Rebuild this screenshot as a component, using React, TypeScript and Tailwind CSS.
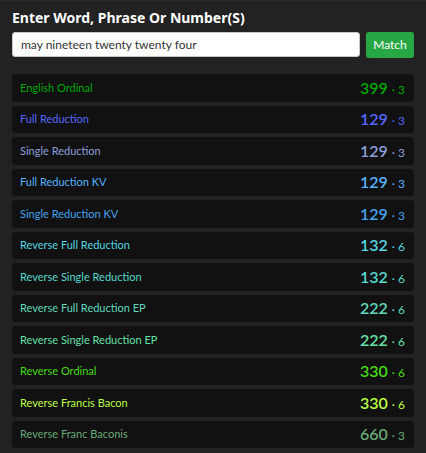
import { useState } from 'react';

// cipher rows shown under the search box
const ciphers = [
  { name: 'English Ordinal', value: 399, root: 3, color: 'text-[#00a800]' },
  { name: 'Full Reduction', value: 129, root: 3, color: 'text-[#5566ff]' },
  { name: 'Single Reduction', value: 129, root: 3, color: 'text-[#8c9edc]' },
  { name: 'Full Reduction KV', value: 129, root: 3, color: 'text-[#55b2ff]' },
  { name: 'Single Reduction KV', value: 129, root: 3, color: 'text-[#44a2ee]' },
  { name: 'Reverse Full Reduction', value: 132, root: 6, color: 'text-[#55d6e0]' },
  { name: 'Reverse Single Reduction', value: 132, root: 6, color: 'text-[#55d8cc]' },
  { name: 'Reverse Full Reduction EP', value: 222, root: 6, color: 'text-[#5fd8bc]' },
  { name: 'Reverse Single Reduction EP', value: 222, root: 6, color: 'text-[#64e0a6]' },
  { name: 'Reverse Ordinal', value: 330, root: 6, color: 'text-[#44dd11]' },
  { name: 'Reverse Francis Bacon', value: 330, root: 6, color: 'text-[#bbff44]' },
  { name: 'Reverse Franc Baconis', value: 660, root: 3, color: 'text-[#66aa77]' },
];

export default function App() {
  const [query, setQuery] = useState('may nineteen twenty twenty four');

  return (
    <div className="h-[453px] w-[426px] overflow-hidden bg-[#222222] border-t border-[#2c2c2c] px-3 pt-[7px] font-['Lato','Noto_Sans',sans-serif]">
      {/* Header */}
      <h1 className="font-['Noto_Sans',sans-serif] text-[14px] font-bold leading-[20px] text-white">
        Enter Word, Phrase Or Number(S)
      </h1>

      {/* Search */}
      <div className="mt-[4px] flex gap-[6px]">
        <input
          value={query}
          onChange={e => setQuery(e.target.value)}
          className="h-[25px] flex-1 rounded-[3px] border border-[#c8c8c8] bg-white px-[8px] text-[12px] text-[#333] outline-none"
        />
        <button className="h-[26px] w-[48px] rounded-[3px] bg-[#28a745] text-[12px] text-white">
          Match
        </button>
      </div>

      {/* Results */}
      <div className="mt-[16px] flex flex-col gap-[4px]">
        {ciphers.map(c => (
          <div
            key={c.name}
            className={`flex h-[27.5px] items-center justify-between rounded-[4px] bg-[#111111] pl-[8px] pr-[9px] ${c.color}`}
          >
            <span className="text-[11px]">{c.name}</span>
            <span className="flex items-baseline">
              <span className="text-[16px] font-semibold">{c.value}</span>
              <span className="ml-[4px] text-[12px]">· {c.root}</span>
            </span>
          </div>
        ))}
      </div>
    </div>
  );
}
